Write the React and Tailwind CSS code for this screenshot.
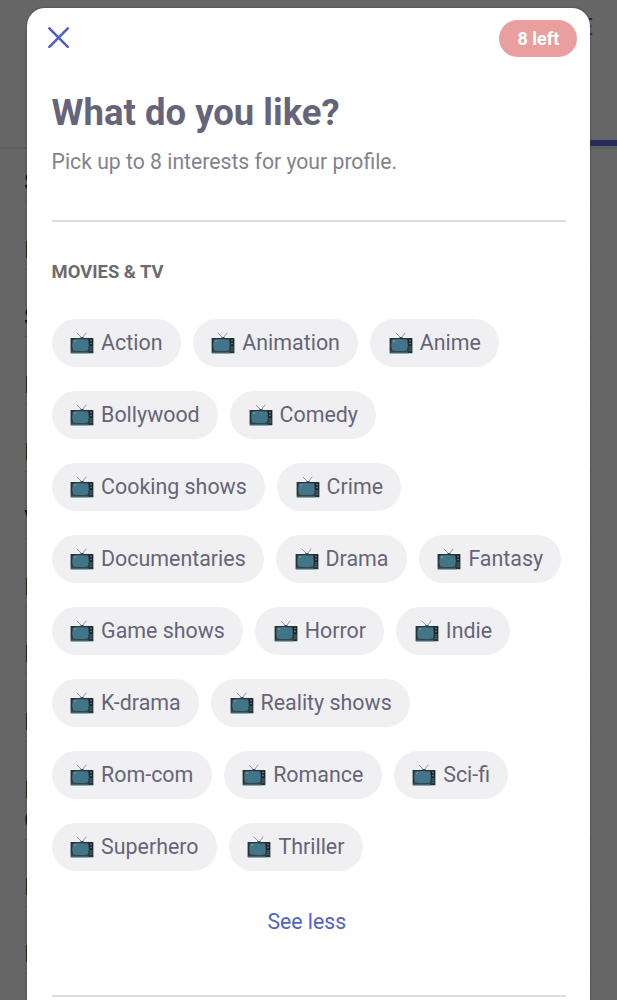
/**
 * Interests picker: modal sheet over a dimmed profile form.
 */

const INTERESTS = [
    'Action', 'Animation', 'Anime', 'Bollywood', 'Comedy', 'Cooking shows', 'Crime',
    'Documentaries', 'Drama', 'Fantasy', 'Game shows', 'Horror', 'Indie', 'K-drama',
    'Reality shows', 'Rom-com', 'Romance', 'Sci-fi', 'Superhero', 'Thriller',
];

const FORM_ROWS = ['S', 'I', 'S', 'I', 'I', 'V', 'I', 'I', 'I', 'I O', 'I', 'I'];

const TvIcon = () => (
    <svg className="block h-[24px] w-[24px] shrink-0" viewBox="0 0 24 24">
        <path d="M7.2 2.2 12 7.2 16 2" fill="none" stroke="#8b9092" strokeWidth="0.9" strokeLinecap="round" />
        <path d="M9.8 7.3q2.2-2.5 4.4 0z" fill="#34474e" />
        <rect x="0.6" y="6.9" width="22.8" height="15.4" rx="0.6" fill="#263238" />
        <rect x="1" y="20.6" width="17.8" height="1.7" fill="#3a6675" />
        <path d="M2.8 8.6q7.7-1 15.4 0 1.1 5.3 0 10.8-7.7 1-15.4 0-1.1-5.4 0-10.8z" fill="#437589" />
        <path d="M4 10.4 6.2 9.6" fill="none" stroke="#7fb0bd" strokeWidth="1" />
        <rect x="19.4" y="8" width="3.2" height="6.4" fill="#15191d" />
        <circle cx="21" cy="9.6" r="1" fill="#607d87" />
        <circle cx="21" cy="12.6" r="1" fill="#607d87" />
        <path d="M19.6 16h2.8M19.6 17.8h2.8M19.6 19.6h2.8" stroke="#5b7d89" strokeWidth="0.7" />
    </svg>
);

const Chip = ({ label }) => (
    <button className="flex h-12 items-center gap-[7px] rounded-full bg-[#f0f0f2] pr-[18.4px] pl-[18.5px] text-[21.4px] text-[#66647a]">
        <TvIcon />
        <span className="pt-[1.5px]">{label}</span>
    </button>
);

const Backdrop = () => (
    <div className="h-full bg-[#666666] text-[24px] leading-[30px] text-[#111111]">
        <div className="flex h-[149px] justify-end border-b-2 border-[#5d5d5d] pt-[12px] pr-[24px] text-[#20254f]">E</div>
        <div className="-mt-[9px] ml-auto h-[6px] w-[160px] bg-[#262b5b]" />
        <div className="mr-[25px] ml-[24px] -mt-[11px]">
            {FORM_ROWS.map((label, i) => (
                <div key={i} className={`flex items-end border-b border-[#5c5c5c] pb-[4px] ${label === 'I O' ? 'h-[98px]' : 'h-[67.4px]'}`}>
                    <span className="w-4">{label}</span>
                </div>
            ))}
        </div>
    </div>
);

export default function App() {
    return (
        <div className="relative h-[1000px] w-full overflow-hidden bg-[#666666] font-['Roboto',sans-serif]">
            <Backdrop />
            <div className="absolute top-[8px] right-[27.5px] bottom-0 left-[27.4px] overflow-hidden rounded-t-[18px] bg-white pr-6 pl-[24.2px] shadow-[0_0_2px_#333]">
                <div className="-mr-[11.9px] flex h-[60px] items-center justify-between">
                    <svg className="-ml-[4px] h-[22px] w-[22px]" viewBox="0 0 22 22" fill="none" stroke="#505fc0" strokeWidth="2.6" strokeLinecap="round">
                        <path d="m1.4 1.4 18.4 18.4M19.8 1.4 1.4 19.8" />
                    </svg>
                    <span className="flex h-[37px] w-[78px] items-center justify-center rounded-full bg-[#e99f9d] text-[18px] font-bold text-white">8 left</span>
                </div>
                <h1 className="mt-[23px] text-[36.5px] leading-[44px] font-bold text-[#66647a]">What do you like?</h1>
                <p className="mt-[13px] text-[21.2px] leading-[28px] text-[#84828f]">Pick up to 8 interests for your profile.</p>
                <div className="mt-[44px] h-[2px] bg-[#dddddf]" />
                <h2 className="mt-[38px] text-[18.4px] leading-[24px] font-bold text-[#6b6b6e]">MOVIES &amp; TV</h2>
                <div className="mt-[34.5px] flex flex-wrap gap-x-3 gap-y-6">
                    {INTERESTS.map((name) => <Chip key={name} label={name} />)}
                </div>
                <button className="mx-auto mt-[37.5px] block pr-[3.5px] text-[21.2px] leading-[28px] text-[#5263bd]">See less</button>
                <div className="mt-[58.5px] h-[2px] bg-[#dddddf]" />
            </div>
        </div>
    );
}
